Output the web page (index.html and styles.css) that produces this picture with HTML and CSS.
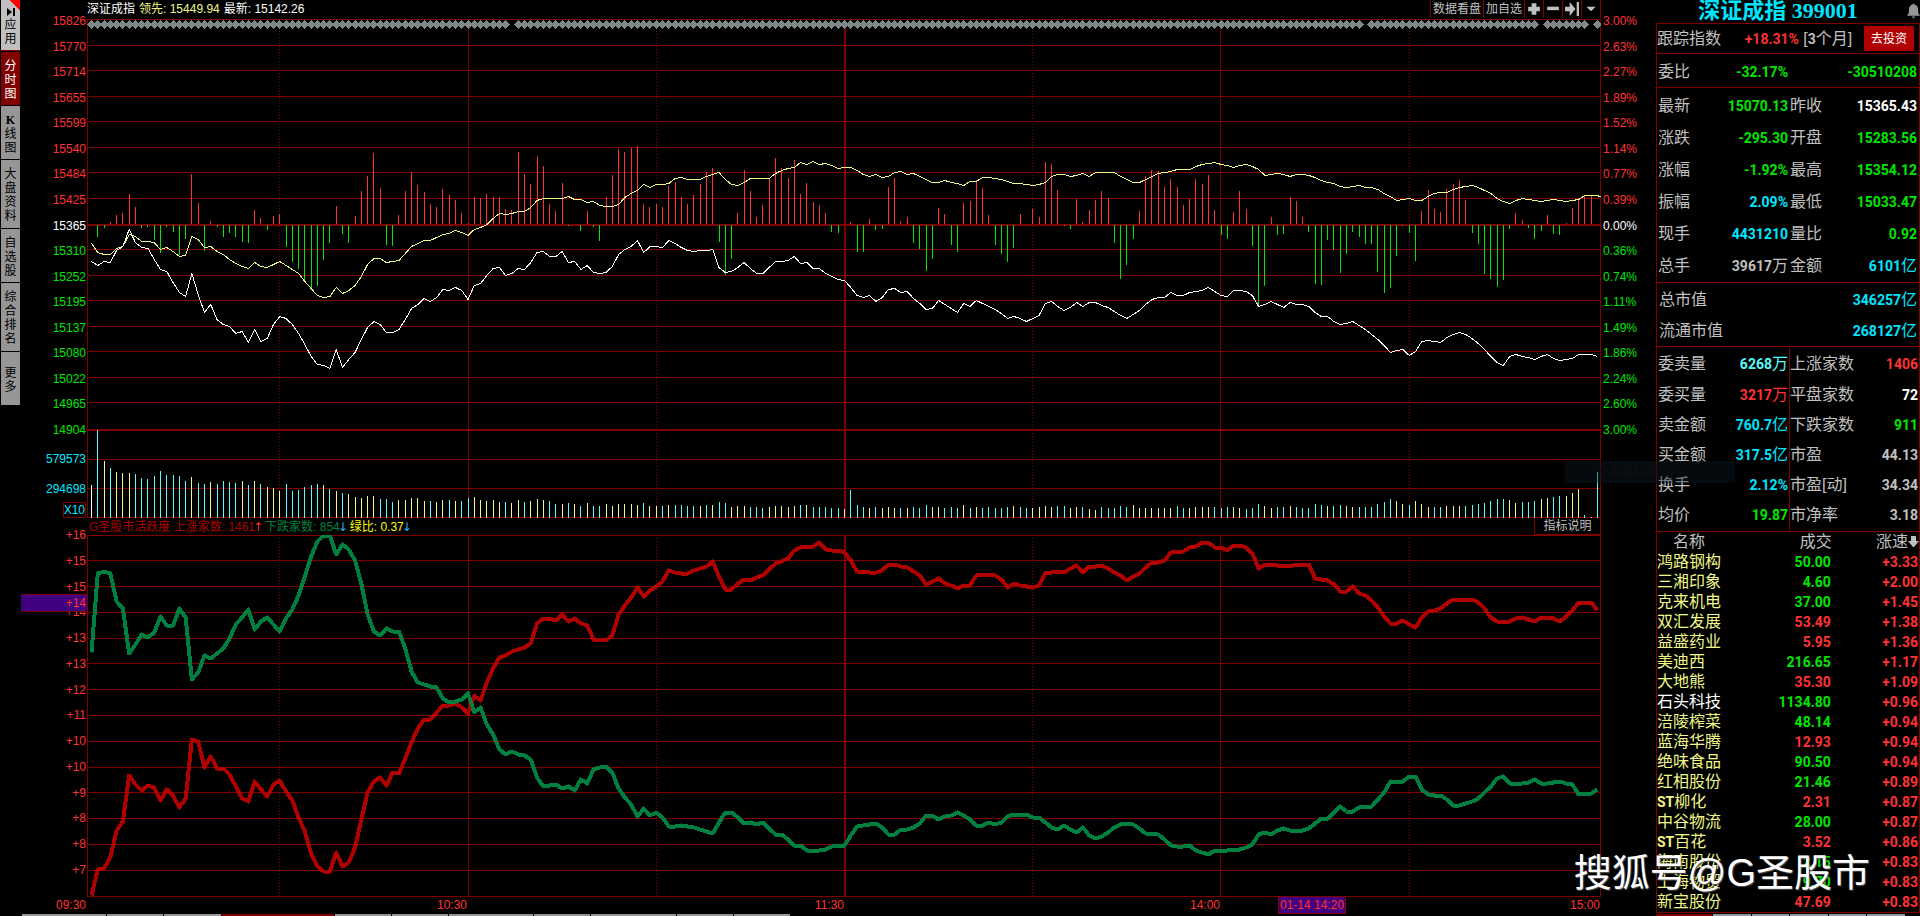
FILE: index.html
```html
<!DOCTYPE html>
<html lang="zh-CN">
<head>
    <meta charset="UTF-8">
    <meta name="viewport" content="width=device-width, initial-scale=1.0">
    <title>深证成指 399001</title>
    <link rel="stylesheet" href="styles.css">
</head>
<body>
    <!-- 左侧标签 -->
    <nav class="side">
        <button class="side-btn app"><svg class="side-icon" viewBox="0 0 8 8"><path d="M0 0L5 4L0 8ZM6 0H8V8H6Z"/></svg>应用</button>
        <button class="side-btn active">分时图</button>
        <button class="side-btn"><b>K</b>线图</button>
        <button class="side-btn tall">大盘资料</button>
        <button class="side-btn">自选股</button>
        <button class="side-btn tall">综合排名</button>
        <button class="side-btn">更多</button>
    </nav>

    <!-- 分时走势 -->
    <main class="board">
        <header class="title-bar">
            <span>深证成指</span>
            <span class="yellow">领先: 15449.94</span>
            <span>最新: 15142.26</span>
            <div class="toolbar">
                <button>数据看盘</button>
                <button>加自选</button>
                <button class="icon" aria-label="放大"><svg viewBox="0 0 12 12"><path d="M4 1H8V4H11V8H8V11H4V8H1V4H4Z"/></svg></button>
                <button class="icon" aria-label="缩小"><svg viewBox="0 0 12 12"><path d="M1 4H11V7H1Z"/></svg></button>
                <button class="icon" aria-label="移到最后"><svg viewBox="0 0 12 12"><path d="M0 4H4V0L9 6L4 12V8H0ZM10 0H12V12H10Z"/></svg></button>
                <button class="icon" aria-label="菜单"><svg viewBox="0 0 12 12"><path d="M2 4H10L6 8Z"/></svg></button>
            </div>
        </header>

        <div class="axis left price-axis red">
            <span>15826</span><span>15770</span><span>15714</span><span>15655</span><span>15599</span><span>15540</span><span>15484</span><span>15425</span>
            <span class="white">15365</span>
            <span class="green">15310</span><span class="green">15252</span><span class="green">15195</span><span class="green">15137</span><span class="green">15080</span><span class="green">15022</span><span class="green">14965</span><span class="green">14904</span>
        </div>
        <svg id="priceChart" class="chart" viewBox="87 18 1514 412" preserveAspectRatio="none"></svg>
        <div class="axis right price-axis red">
            <span>3.00%</span><span>2.63%</span><span>2.27%</span><span>1.89%</span><span>1.52%</span><span>1.14%</span><span>0.77%</span><span>0.39%</span>
            <span class="white">0.00%</span>
            <span class="green">0.36%</span><span class="green">0.74%</span><span class="green">1.11%</span><span class="green">1.49%</span><span class="green">1.86%</span><span class="green">2.24%</span><span class="green">2.60%</span><span class="green">3.00%</span>
        </div>

        <div class="axis left volume-axis cyan">
            <span>579573</span><span>294698</span><span class="unit">X10</span>
        </div>
        <svg id="volumeChart" class="chart" viewBox="87 430 1514 88" preserveAspectRatio="none"></svg>
        <div></div>

        <div class="indicator-bar">
            <span class="dark-red">G圣股市活跃度 上涨家数: 1461<i class="up">↑</i></span>
            <span class="dark-green">下跌家数: 854<i class="down">↓</i></span>
            <span class="bright-yellow">绿比: 0.37<i class="down">↓</i></span>
            <button class="help-btn">指标说明</button>
        </div>

        <div class="axis left indicator-axis red">
            <span>+16</span><span>+15</span><span>+15</span><span>+14</span><span>+13</span><span>+13</span><span>+12</span><span>+11</span><span>+10</span><span>+10</span><span>+9</span><span>+8</span><span>+8</span><span>+7</span>
            <span class="cursor-value">+14</span>
        </div>
        <svg id="indicatorChart" class="chart" viewBox="87 535 1514 362" preserveAspectRatio="none"></svg>
        <div></div>

        <div class="time-axis red">
            <span>09:30</span><span>10:30</span><span>11:30</span><span>14:00</span>
            <span>15:00<b class="cursor-time">01-14 14:20</b></span>
        </div>
    </main>

    <!-- 右侧行情 -->
    <aside class="quote">
        <h1>深证成指 399001
            <svg class="bell" viewBox="0 0 14 16"><path d="M7 0C8 0 8 1 8 1C11 2 12 4 12 7V10L14 13H0L2 10V7C2 4 3 2 6 1C6 1 6 0 7 0ZM5 14H9L7 16Z"/></svg>
        </h1>
        <div class="track">
            <span>跟踪指数</span>
            <span class="track-rate"><b class="red">+18.31%</b> [<b>3</b>个月]</span>
            <button class="invest-btn">去投资</button>
        </div>
        <dl class="grid ratio">
            <dt>委比</dt><dd class="green">-32.17%</dd><dt></dt><dd class="green">-30510208</dd>
        </dl>
        <dl class="grid">
            <dt>最新</dt><dd class="green">15070.13</dd><dt>昨收</dt><dd class="white">15365.43</dd>
            <dt>涨跌</dt><dd class="green">-295.30</dd><dt>开盘</dt><dd class="green">15283.56</dd>
            <dt>涨幅</dt><dd class="green">-1.92%</dd><dt>最高</dt><dd class="green">15354.12</dd>
            <dt>振幅</dt><dd class="cyan">2.09%</dd><dt>最低</dt><dd class="green">15033.47</dd>
            <dt>现手</dt><dd class="cyan">4431210</dd><dt>量比</dt><dd class="green">0.92</dd>
            <dt>总手</dt><dd>39617<i>万</i></dd><dt>金额</dt><dd class="cyan">6101<i>亿</i></dd>
        </dl>
        <dl class="grid market">
            <dt>总市值</dt><dd class="cyan">346257<i>亿</i></dd>
            <dt>流通市值</dt><dd class="cyan">268127<i>亿</i></dd>
        </dl>
        <dl class="grid split">
            <dt>委卖量</dt><dd class="light-cyan">6268<i>万</i></dd><dt>上涨家数</dt><dd class="red">1406</dd>
            <dt>委买量</dt><dd class="red">3217<i>万</i></dd><dt>平盘家数</dt><dd class="white">72</dd>
            <dt>卖金额</dt><dd class="cyan">760.7<i>亿</i></dd><dt>下跌家数</dt><dd class="green">911</dd>
            <dt>买金额</dt><dd class="cyan">317.5<i>亿</i></dd><dt>市盈</dt><dd>44.13</dd>
            <dt>换手</dt><dd class="cyan">2.12%</dd><dt>市盈[动]</dt><dd>34.34</dd>
            <dt>均价</dt><dd class="green">19.87</dd><dt>市净率</dt><dd>3.18</dd>
        </dl>
        <table class="stocks">
            <thead>
                <tr><th>名称</th><th>成交</th><th>涨速<svg class="sort" viewBox="0 0 11 11"><path d="M3 0H8V5H11L6 11H5L0 5H3Z"/></svg></th></tr>
            </thead>
            <tbody>
                <tr><td>鸿路钢构</td><td class="green">50.00</td><td>+3.33</td></tr>
                <tr><td>三湘印象</td><td class="green">4.60</td><td>+2.00</td></tr>
                <tr><td>克来机电</td><td class="green">37.00</td><td>+1.45</td></tr>
                <tr><td>双汇发展</td><td class="red">53.49</td><td>+1.38</td></tr>
                <tr><td>益盛药业</td><td class="red">5.95</td><td>+1.36</td></tr>
                <tr><td>美迪西</td><td class="green">216.65</td><td>+1.17</td></tr>
                <tr><td>大地熊</td><td class="red">35.30</td><td>+1.09</td></tr>
                <tr><td class="white">石头科技</td><td class="green">1134.80</td><td>+0.96</td></tr>
                <tr><td>涪陵榨菜</td><td class="green">48.14</td><td>+0.94</td></tr>
                <tr><td>蓝海华腾</td><td class="red">12.93</td><td>+0.94</td></tr>
                <tr><td>绝味食品</td><td class="green">90.50</td><td>+0.94</td></tr>
                <tr><td>红相股份</td><td class="green">21.46</td><td>+0.89</td></tr>
                <tr><td><b>ST</b>柳化</td><td class="red">2.31</td><td>+0.87</td></tr>
                <tr><td>中谷物流</td><td class="green">28.00</td><td>+0.87</td></tr>
                <tr><td><b>ST</b>百花</td><td class="red">3.52</td><td>+0.86</td></tr>
                <tr><td>海南股份</td><td class="green">2.15</td><td>+0.83</td></tr>
                <tr><td>上海物贸</td><td class="green">9.70</td><td>+0.83</td></tr>
                <tr><td>新宝股份</td><td class="red">47.69</td><td>+0.83</td></tr>
            </tbody>
        </table>
        <div class="tab-strip quote-tabs"><i class="on"></i><i></i><i></i><i></i><i></i><i></i></div>
    </aside>

    <div class="tab-strip board-tabs"><i class="wide"></i><i></i><i></i><i class="on"></i><i></i><i></i><i class="wide"></i><i></i><i class="wide"></i><i></i><i></i></div>
    <div class="ghost">全屏幕截图(S)</div>
    <div class="watermark">搜狐号@G圣股市</div>

    <script src="chart.js"></script>
</body>
</html>
```
FILE: styles.css
```css
* {
    margin: 0;
    padding: 0;
    box-sizing: border-box;
}

body {
    display: flex;
    min-height: 100vh;
    background: #000;
    color: #c0c0c0;
    font-family: "Liberation Sans", "Noto Sans CJK SC", sans-serif;
    font-size: 12px;
    line-height: 14px;
    overflow: hidden;
}

button {
    font: inherit;
    color: inherit;
    background: none;
    border: none;
    cursor: pointer;
}

i {
    font-style: normal;
}

.red { color: #ff3232; }
.green { color: #00e600; }
.white { color: #fff; }
.cyan { color: #00e6ff; }
.light-cyan { color: #54fcfc; }
.yellow { color: #f0f888; }
.dark-red { color: #b00000; }
.dark-green { color: #008040; }
.bright-yellow { color: #ffff00; }

/* 左侧标签 */
.side {
    width: 20px;
    padding-left: 1px;
    display: flex;
    flex-direction: column;
    gap: 1px;
}

.side-btn {
    display: flex;
    flex-direction: column;
    align-items: center;
    justify-content: center;
    width: 19px;
    height: 53px;
    padding: 2px 3px 0;
    background: #969696;
    color: #000;
    word-break: break-all;
}

.side-btn.tall {
    height: 68px;
}

.side-btn b {
    font-family: "Liberation Serif", serif;
}

.side-btn.active {
    background: #800000;
    color: #fff;
}

.side-btn.app {
    height: 51px;
    background: linear-gradient(45deg, #c0c0c0 85%, #ff0000 85%);
    border-bottom: 1px solid #800000;
}

.side-icon {
    width: 8px;
    height: 8px;
    margin: 2px 0;
}

/* 走势区 */
.board {
    flex: 1;
    min-width: 0;
    height: 100vh;
    display: grid;
    grid-template-columns: 67px minmax(0, 1fr) 55px;
    grid-template-rows: 18px minmax(0, 412fr) minmax(0, 88fr) 17px minmax(0, 362fr) 19px;
}

.title-bar,
.indicator-bar {
    grid-column: 2;
    display: flex;
    align-items: center;
    gap: 4px;
    white-space: nowrap;
}

.title-bar {
    color: #fff;
}

.toolbar {
    display: flex;
    margin-left: auto;
    height: 18px;
    color: #c0c0c0;
    border-right: 1px solid #800000;
}

.toolbar button {
    padding: 0 2px;
    border-left: 1px solid #800000;
}

.toolbar button.icon {
    display: flex;
    align-items: center;
}

.toolbar svg {
    width: 14px;
    height: 14px;
    fill: #c0c0c0;
}

.chart {
    display: block;
    width: 100%;
    height: 100%;
    shape-rendering: crispEdges;
}

.chart .grid-line { stroke: #800000; }
.chart .thick { stroke-width: 2; }
.chart .dotted { stroke-dasharray: 1 2; }
.chart .line { fill: none; stroke-width: 1; }
.chart .wide { stroke-width: 4; stroke-linejoin: round; }

.axis {
    position: relative;
    display: flex;
    flex-direction: column;
    justify-content: space-between;
}

.axis.left {
    grid-column: 1;
    align-items: flex-end;
    padding-right: 1px;
}

.axis.right {
    padding-left: 2px;
}

.price-axis {
    margin: -4px 0 -7px;
}

.axis.volume-axis {
    display: grid;
    grid-template-columns: 1fr;
    grid-template-rows: 1fr 1fr 1fr;
    align-items: end;
    justify-items: end;
}

.volume-axis span {
    margin-bottom: -7px;
}

.volume-axis .unit {
    margin-bottom: 0;
    border: 1px solid #800000;
}

.indicator-axis {
    margin: -7px 0 20px;
}

.indicator-axis .cursor-value {
    position: absolute;
    top: 19%;
    left: 1px;
    right: 0;
    padding-right: 1px;
    line-height: 16px;
    text-align: right;
    background: #400080;
    border: 1px solid #800000;
    border-width: 1px 0;
}

.indicator-bar {
    padding-left: 2px;
}

.indicator-bar i {
    display: inline-block;
    width: 6px;
    text-indent: -2px;
    font-family: "DejaVu Sans", sans-serif;
}

.indicator-bar .up { color: #ff3232; }
.indicator-bar .down { color: #30b0f0; }

.help-btn {
    margin-left: auto;
    align-self: stretch;
    width: 67px;
    border: 1px solid #800000;
    border-top: none;
}

.time-axis {
    grid-column: 1 / 3;
    display: grid;
    grid-template-columns: 67px 381fr 377fr 376fr 380fr;
    text-align: right;
    line-height: 16px;
}

.time-axis span {
    position: relative;
    padding-right: 1px;
}

.cursor-time {
    position: absolute;
    left: 15%;
    padding: 0 1px;
    font-weight: normal;
    background: #400080;
    border: 1px solid #800000;
    border-top: none;
}

/* 右侧行情 */
.quote {
    width: 264px;
    height: 100vh;
    display: grid;
    grid-template-columns: minmax(0, 1fr);
    grid-template-rows: 23px 30px 34px 195fr 64fr 184fr auto 4px;
    font-size: 16px;
    line-height: 20px;
}

.quote > * {
    border: 1px solid #800000;
    border-bottom: none;
}

.quote h1 {
    position: relative;
    border: none;
    color: #00e6ff;
    font-family: "Liberation Serif", "Noto Sans CJK SC", serif;
    font-size: 22px;
    line-height: 22px;
    text-align: center;
    padding-right: 20px;
}

.bell {
    position: absolute;
    top: 3px;
    right: 0;
    width: 13px;
    height: 16px;
    fill: #969696;
}

.quote b,
.quote dd,
.stocks td {
    font-family: Roboto, "Noto Sans CJK SC", sans-serif;
    font-size: 14px;
    font-weight: bold;
}

.quote h1,
.track {
    white-space: nowrap;
}

.track {
    display: flex;
    align-items: center;
    justify-content: space-between;
    padding-right: 5px;
}

.track-rate {
    margin-left: 12px;
}

.invest-btn {
    width: 50px;
    height: 25px;
    background: #b00000;
    color: #fff;
    font-size: 12px;
}

.grid {
    display: grid;
    grid-template-columns: 48px 82px 64px minmax(0, 1fr);
    grid-auto-rows: 1fr;
    align-items: center;
    padding: 2px 2px 0 1px;
    white-space: nowrap;
}

.ratio {
    grid-template-columns: 48px 82px minmax(0, 1fr) auto;
}

.grid dt:nth-of-type(even) {
    padding-left: 2px;
}

.grid dd {
    text-align: right;
}

.grid dd i {
    font-size: 16px;
    font-weight: normal;
}

.market {
    grid-template-columns: auto 1fr;
}

.grid.market dt {
    padding-left: 1px;
}

.split {
    padding-right: 1px;
    background: linear-gradient(#800000, #800000) 132px 0 / 1px 100% no-repeat;
}

.stocks {
    border-collapse: collapse;
    table-layout: fixed;
    width: 100%;
}

.stocks th {
    font-weight: normal;
    text-align: right;
    height: 21px;
}

.stocks th:first-child {
    padding-left: 16px;
    text-align: left;
}

.stocks td {
    height: 20px;
    padding-right: 1px;
    text-align: right;
    color: #ff3232;
}

.stocks td:first-child {
    color: #f0f888;
    font-size: 16px;
    font-weight: normal;
    text-align: left;
}

.stocks td.green { color: #00e600; }
.stocks td:first-child.white { color: #fff; }

.sort {
    width: 11px;
    height: 11px;
    fill: #c0c0c0;
}

/* 底部标签边缘 */
.tab-strip {
    display: flex;
    gap: 1px;
    height: 2px;
}

.tab-strip i {
    flex: 2;
    background: #969696;
}

.tab-strip .wide {
    flex: 3;
}

.tab-strip .on {
    flex: 4;
    background: #800000;
}

.board-tabs {
    position: absolute;
    left: 22px;
    bottom: 0;
    width: 40%;
}

.quote .quote-tabs {
    height: 4px;
    padding-top: 1px;
    padding-right: 15px;
    border: none;
    border-top: 1px solid #800000;
}

.quote-tabs .on {
    flex: 3;
}

/* 浮层 */
.ghost {
    position: absolute;
    top: 461px;
    right: 185px;
    width: 170px;
    padding-left: 32px;
    line-height: 22px;
    background: rgba(10, 24, 32, 0.4);
    color: #101010;
}

.watermark {
    position: absolute;
    right: 50px;
    bottom: 20px;
    font-size: 38px;
    line-height: 46px;
    color: #fff;
    text-shadow: 1px 1px 1px #555;
    white-space: nowrap;
}
```
FILE: chart.js
```js
// 每分钟一个点, 09:30 - 15:00 共 241 个
const STEP = 6.275;
const START = 91.5;
const NS = 'http://www.w3.org/2000/svg';

const lead = [243,252,254,254,248,246,234,236,241,241,242,249,247,251,256,255,236,239,247,246,251,254,259,263,266,268,262,266,267,264,261,265,269,273,281,288,295,297,296,287,293,290,285,276,264,258,258,262,261,260,253,246,243,240,240,237,234,233,230,232,235,229,
    227,224,218,213,214,213,211,211,207,200,198,198,198,198,196,199,199,202,201,205,206,206,204,197,193,190,184,187,184,184,183,178,177,179,179,179,176,174,172,179,184,185,182,178,178,178,178,173,170,168,167,162,164,161,164,163,165,168,167,167,170,174,176,174,177,176,172,171,174,173,176,179,182,182,180,182,183,185,181,181,177,177,178,179,181,183,183,184,185,184,182,
    176,174,174,176,175,173,176,172,172,172,172,176,179,182,182,179,176,173,172,171,169,169,169,166,164,163,162,164,165,167,165,164,166,169,175,174,173,174,176,174,174,175,177,180,182,183,186,187,186,185,187,187,189,193,196,200,199,198,200,200,196,193,192,192,189,187,186,185,187,190,193,198,201,203,200,198,199,200,201,200,199,200,201,200,199,195,195,195,198];

const last = [261,265,261,262,250,246,229,242,247,248,259,269,271,282,292,296,273,294,312,304,319,324,326,333,331,342,329,341,338,324,316,318,324,333,344,356,364,365,368,349,367,359,352,339,327,321,324,332,332,329,319,308,304,298,301,297,289,290,287,290,299,285,
    283,275,268,267,275,273,268,269,262,252,251,256,256,251,262,261,269,265,272,273,272,266,254,249,246,240,252,246,246,247,240,243,247,250,251,250,250,249,267,272,271,267,262,268,273,273,267,261,261,260,256,263,262,268,268,273,276,279,280,287,295,297,295,301,297,289,288,292,291,298,303,309,308,300,304,308,312,303,306,300,303,306,309,313,318,316,318,321,318,315,
    303,301,306,310,307,302,306,302,302,305,307,311,315,318,314,310,304,299,297,297,292,295,295,292,291,290,287,291,295,296,290,290,291,295,306,304,301,304,307,302,304,304,306,312,316,316,321,324,323,321,325,329,334,339,345,352,350,349,355,351,341,340,341,342,337,334,332,334,338,343,349,356,362,365,356,354,356,357,359,356,354,358,360,359,358,354,354,354,356];

// 红绿柱的端点, 小于 224 为红柱
const power = [224,237,228,222,215,213,194,207,228,227,240,253,227,232,255,239,174,203,251,221,227,237,233,237,242,243,210,218,230,216,214,247,262,269,280,288,286,260,243,206,234,243,216,191,176,153,188,245,246,215,191,172,185,192,204,207,189,195,200,213,223,197,
    198,194,197,197,209,210,152,174,184,156,166,204,211,183,226,224,231,211,227,241,197,175,149,152,148,146,204,207,204,207,186,182,197,204,195,184,172,168,242,275,259,213,170,191,217,205,179,158,168,178,160,194,183,202,205,213,232,233,224,222,252,252,219,230,229,187,178,221,217,243,249,271,259,208,214,245,252,203,201,180,188,215,245,254,262,248,214,224,209,217,
    162,164,190,226,229,199,222,210,200,191,198,243,279,265,239,211,176,170,171,187,179,187,205,199,179,184,175,210,235,239,212,191,209,246,306,286,217,235,234,197,201,217,232,284,285,240,250,273,254,232,237,244,244,272,293,288,256,226,233,261,211,190,209,212,189,184,180,200,233,244,274,279,287,280,229,213,220,228,239,231,215,234,235,223,208,198,195,195,224];

// w 白 c 青 y 黄 + 高度
const volume = ('w33 c88 y57 c50 y46 y45 y45 c44 c40 c39 c42 c47 c43 c43 c42 c37 y41 c35 c34 y36 c34 c37 c36 c35 y37 c33 y37 c34 y31 y30 y27 c34 c27 c28 c31 c33 c34 y33 c29 y27 c25 y24 y21 y20 y22 y22 c19 c19 c16 y18 y18 y20 y20 y17 c17 y16 y18 c18 y17 c17 c20 y21 ' +
    'y18 y17 y18 y16 c16 y15 y18 c16 y17 y19 y18 c17 c14 y14 c15 y14 c12 y15 c12 c12 y14 y12 y14 y14 y14 y13 c15 y12 y12 c12 y13 c13 c13 c12 c12 y12 c13 y13 c16 c15 y11 y12 y12 c11 c11 c10 y11 y12 y12 y11 y12 c13 y13 c11 c11 c11 c10 c10 y9 c28 c13 c11 y10 c11 y10 y11 y10 c10 y10 c11 c10 c13 y11 y11 c10 c11 c10 y13 c10 y11 c10 c11 c10 c10 c11 y12 c11 c10 y10 y11 ' +
    'y12 y11 c12 c12 y10 y11 c11 y9 y8 c11 c10 c10 c12 c11 y13 y10 y10 y10 y10 y10 y10 c12 c10 y10 y11 y11 y11 c11 c10 c11 y11 y10 c9 c10 c14 y12 y10 c11 c11 y12 c11 c10 c10 c14 c13 y12 c12 c13 y12 y11 c11 c11 c11 c14 c16 c19 y17 y14 c13 y17 y14 y11 c11 c11 y12 y12 y12 c12 c13 c14 c15 c17 c19 c19 y18 y15 c16 c16 c17 y19 y20 c21 c22 y22 y25 y29 c3 w1 c46').split(' ');

const rise = [895,869,868,857,830,821,775,784,790,785,787,800,789,795,807,798,739,741,767,756,768,768,774,786,798,801,781,789,796,784,780,791,800,817,831,853,866,871,871,852,866,862,847,819,792,781,777,785,772,773,758,742,728,719,719,712,705,705,703,707,713,695,
    700,682,668,657,655,651,649,647,643,623,618,618,620,614,621,618,623,625,639,639,640,635,614,605,597,587,596,590,586,581,570,572,573,573,570,568,566,561,576,589,589,583,579,580,577,575,569,563,561,558,550,547,546,546,542,549,550,550,552,560,571,571,572,572,570,564,564,566,567,571,575,584,581,578,583,585,588,585,585,575,574,574,575,579,587,583,585,586,587,585,
    572,572,571,572,568,565,572,566,566,565,568,572,575,580,576,573,567,562,562,560,552,551,551,547,546,542,542,547,547,550,545,545,547,553,568,564,564,565,565,566,564,564,564,578,579,580,584,591,591,586,593,595,600,607,616,623,623,620,624,627,617,611,610,608,603,599,599,599,599,602,608,617,621,621,621,618,617,619,621,617,617,618,621,616,610,602,602,602,610];

const fall = [652,573,571,573,601,608,653,644,634,637,632,616,625,625,608,617,679,672,655,658,653,648,638,624,617,609,629,621,617,624,631,618,609,595,576,556,541,535,535,554,544,549,560,583,614,631,635,628,631,631,648,671,682,684,686,687,698,702,701,699,693,712,
    707,724,734,749,754,751,754,755,759,777,786,785,784,788,786,790,779,783,769,767,766,772,788,797,804,816,808,815,812,817,826,826,825,826,827,829,831,833,822,812,812,817,823,822,824,822,828,834,834,839,845,845,850,850,850,849,846,845,845,835,826,825,824,823,827,834,834,829,829,827,823,815,815,819,816,815,812,815,819,825,825,822,824,822,816,814,814,814,817,817,
    822,827,829,825,829,832,827,835,838,836,832,827,824,823,824,828,833,833,834,839,845,846,846,845,850,852,854,850,850,850,849,849,847,844,834,832,834,830,828,830,830,830,828,823,818,818,812,806,811,811,807,806,806,799,792,781,782,781,776,776,789,794,795,795,799,805,805,803,801,798,792,786,778,776,783,783,783,782,779,783,783,782,781,783,784,794,793,793,789];

function add(svg, tag, attrs) {
    const el = document.createElementNS(NS, tag);
    for (const key in attrs) {
        el.setAttribute(key, attrs[key]);
    }
    svg.appendChild(el);
}

function line(svg, x1, y1, x2, y2, cls) {
    add(svg, 'line', { x1, y1, x2, y2, class: 'grid-line ' + (cls || '') });
}

function bar(svg, i, top, bottom, fill) {
    add(svg, 'rect', { x: Math.floor(START + i * STEP), y: top, width: 1, height: bottom - top, fill });
}

function curve(svg, data, stroke, cls) {
    const points = data.map((y, i) => (START + i * STEP) + ',' + (y + 0.5)).join(' ');
    add(svg, 'polyline', { points, stroke, class: 'line ' + (cls || '') });
}

function drawGrid(svg, top, bottom, rows) {
    rows.forEach(y => line(svg, 87, y + 0.5, 1601, y + 0.5));
    [87.5, 468.5, 1220.5, 1600.5].forEach(x => line(svg, x, top, x, bottom));
    [279.5, 656.5, 1032.5, 1409.5].forEach(x => line(svg, x, top, x, bottom, 'dotted'));
    line(svg, 845, top, 845, bottom, 'thick');
}

const price = document.getElementById('priceChart');
drawGrid(price, 19, 430, [19, 45, 70, 96, 121, 147, 172, 198, 249, 275, 300, 326, 351, 377, 402, 429]);
line(price, 87, 225, 1601, 225, 'thick');
power.forEach((y, i) => {
    if (y < 224) bar(price, i, y, 224, '#ff3232');
    if (y > 224) bar(price, i, 225, y, '#00e600');
});
curve(price, lead, '#f0f888');
curve(price, last, '#ffffff');
for (let i = 0; i <= 240; i++) {
    if ([67, 203, 231, 239].includes(i)) continue;
    const x = Math.floor(START + i * STEP);
    add(price, 'path', { d: `M${x - 4} 24h1v-1h1v-1h1v-1h1v-1h1v1h1v1h1v1h1v1h1v1h-1v1h-1v1h-1v1h-1v1h-1v-1h-1v-1h-1v-1h-1v-1h-1z`, fill: '#808888' });
}

const vol = document.getElementById('volumeChart');
drawGrid(vol, 430, 518, [430, 459, 488, 517]);
const volColors = { w: '#ffffff', c: '#54fcfc', y: '#f0f888' };
volume.forEach((v, i) => bar(vol, i, 518 - v.slice(1), 518, volColors[v[0]]));

const ind = document.getElementById('indicatorChart');
drawGrid(ind, 535, 897, [535, 560, 586, 612, 638, 663, 689, 715, 741, 767, 792, 818, 844, 870, 896]);
curve(ind, rise, '#b00000', 'wide');
curve(ind, fall, '#008040', 'wide');
```
